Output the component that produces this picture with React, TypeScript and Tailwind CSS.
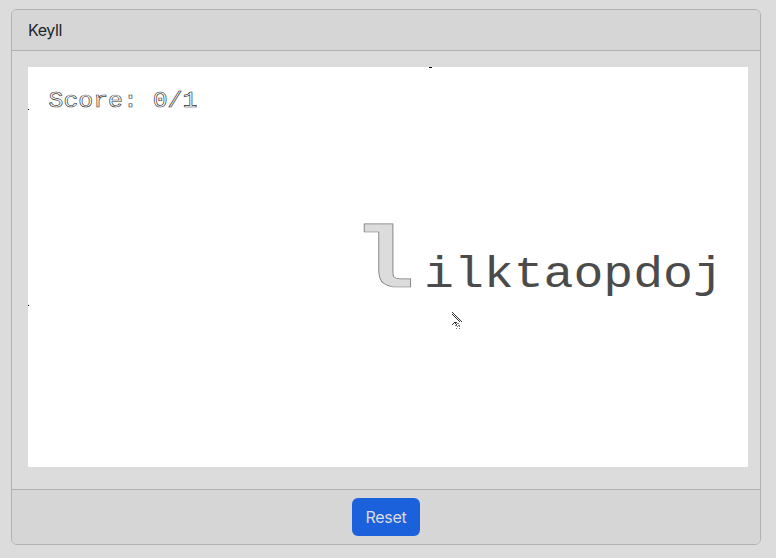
function GameCanvas() {
  return (
    <div className="relative h-[400px] w-[720px] overflow-hidden bg-white font-['Liberation_Mono',monospace] whitespace-nowrap">
      <div className="origin-[0_80%] scale-y-[.92] pt-[19px] pl-[20.5px] text-[24.8px] leading-7 text-white [-webkit-text-stroke:0.7px_#333]">
        Score: 0/1
      </div>
      <div className="flex items-baseline pt-[105px] pl-[330px] leading-[90px]">
        <span className="w-[66px] origin-[30px_50%] scale-x-[1.17] text-[88px] leading-[90px] font-bold text-[#dcdcdc] [-webkit-text-stroke:0.7px_#777]">l</span>
        <span className="inline-block origin-[0_78%] scale-y-[.88] text-[49.8px] leading-[60px] text-[#4b4b4b]">ilktaopdoj</span>
      </div>
      <i className="absolute top-0 left-[401px] h-px w-[3px] bg-black" />
      <i className="absolute top-[42px] left-0 size-px bg-black" />
      <i className="absolute top-[238px] left-0 size-px bg-black" />
      <svg className="absolute top-[245px] left-[424px]" width="11" height="17" viewBox="0 0 11 17" shapeRendering="crispEdges">
        <path fill="#333" d="M0 0h1v1H0zM1 1h1v1H1zM2 2h1v1H2zM3 3h1v1H3zM4 4h1v1H4zM5 5h1v1H5zM6 6h1v1H6zM7 7h1v1H7zM8 8h1v1H8zM9 9h1v1H9zM0 2h1v1H0zM1 3h1v1H1zM2 4h1v1H2zM3 5h1v1H3zM4 6h1v1H4zM5 7h1v1H5zM6 8h1v1H6zM7 9h1v1H7zM2 10h3v1H2zM1 11h1v1H1zM3 11h1v1H3zM0 12h1v1H0zM4 12h1v1H4z" />
        <path fill="#777" d="M5 11h2v1H5zM3 13h2v1H3zM6 13h2v1H6zM5 14h1v1H5zM7 14h1v1H7zM4 16h1v1H4zM7 16h1v1H7z" />
      </svg>
    </div>
  );
}

export default function App() {
  return (
    <main className="h-[558px] bg-[#dcdcdc] pt-[9px] pl-[11px] font-[Inter,sans-serif] text-base text-[#212529]">
      <section className="flex h-[536px] w-[750px] flex-col overflow-hidden rounded-md border border-[#b1b1b1]">
        <header className="flex h-[41px] shrink-0 items-center border-b border-[#b1b1b1] bg-[#d6d6d6] px-4 tracking-[-0.4px]">Keyll</header>
        <div className="flex-1 p-4">
          <GameCanvas />
        </div>
        <footer className="flex h-[55px] shrink-0 items-center justify-center border-t border-[#b1b1b1] bg-[#d6d6d6]">
          <button className="h-[38px] w-[68px] rounded-md bg-[#1b61db] tracking-[-0.3px] text-[#dcdcdc]">Reset</button>
        </footer>
      </section>
    </main>
  );
}
